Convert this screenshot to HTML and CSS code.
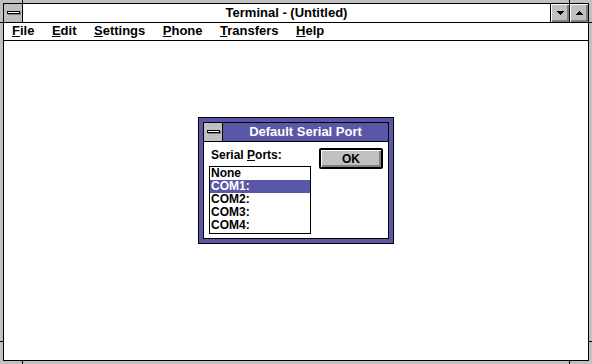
FILE: index.html
```html
<!DOCTYPE html>
<html>
<head>
<meta charset="utf-8">
<link rel="stylesheet" href="styles.css">
</head>
<body>
<div class="window">
  <div class="inner">
    <div class="titlebar">
      <div class="sysbox"><span class="sysbar"></span></div>
      <div class="title">Terminal - (Untitled)</div>
      <div class="btn"><svg width="7" height="4" viewBox="0 0 7 4"><path d="M0 0h7v1h-1v1h-1v1h-1v1h-1v-1h-1v-1h-1v-1h-1z" fill="#000"/></svg></div>
      <div class="btn btn-max"><svg width="7" height="4" viewBox="0 0 7 4"><path d="M3 0h1v1h1v1h1v1h1v1h-7v-1h1v-1h1v-1h1z" fill="#000"/></svg></div>
    </div>
    <div class="menubar">
      <span class="menu"><u>F</u>ile</span>
      <span class="menu"><u>E</u>dit</span>
      <span class="menu"><u>S</u>ettings</span>
      <span class="menu"><u>P</u>hone</span>
      <span class="menu"><u>T</u>ransfers</span>
      <span class="menu"><u>H</u>elp</span>
    </div>
    <div class="client">
      <div class="dialog">
        <div class="dlg-inner">
          <div class="dlg-title">
            <div class="sysbox"><span class="sysbar"></span></div>
            <div class="dlg-caption">Default Serial Port</div>
          </div>
          <div class="dlg-body">
            <div class="col">
              <div class="label">Serial <u>P</u>orts:</div>
              <div class="listbox">
                <div class="item">None</div>
                <div class="item sel">COM1:</div>
                <div class="item">COM2:</div>
                <div class="item">COM3:</div>
                <div class="item">COM4:</div>
              </div>
            </div>
            <div class="ok">OK</div>
          </div>
        </div>
      </div>
    </div>
  </div>
  <i class="mark mv mt1"></i>
  <i class="mark mv mt2"></i>
  <i class="mark mv mb1"></i>
  <i class="mark mv mb2"></i>
  <i class="mark mh ml1"></i>
  <i class="mark mh ml2"></i>
  <i class="mark mh mr1"></i>
  <i class="mark mh mr2"></i>
</div>
</body>
</html>
```
FILE: styles.css
```css
html, body {
  margin: 0;
  padding: 0;
}
body {
  width: 592px;
  height: 364px;
  overflow: hidden;
  font-family: "Liberation Sans", Arial, sans-serif;
  font-weight: bold;
  color: #000;
}
.window {
  position: relative;
  width: 592px;
  height: 364px;
  box-sizing: border-box;
  padding: 3px;
  background: #c0c0c0;
}
.inner {
  height: 100%;
  box-sizing: border-box;
  border: 1px solid #000;
  background: #fff;
  display: flex;
  flex-direction: column;
}
.titlebar {
  display: flex;
  height: 18px;
  border-bottom: 1px solid #000;
  flex-shrink: 0;
}
.sysbox {
  width: 18px;
  background: #c0c0c0;
  border-right: 1px solid #000;
  display: flex;
  align-items: center;
  justify-content: center;
}
.sysbar {
  display: block;
  width: 11px;
  height: 1px;
  border: 1px solid #000;
  background: #fff;
  box-shadow: 1px 1px 0 #808080;
  margin-top: -1px;
}
.title {
  flex: 1;
  text-align: center;
  font-size: 13px;
  line-height: 18px;
  border-right: 1px solid #000;
  background: #fff;
}
.btn {
  width: 18px;
  background: #c0c0c0;
  box-shadow: inset 1px 1px 0 #fff, inset -2px -2px 0 #808080;
  display: flex;
  align-items: center;
  justify-content: center;
  padding-left: 1px;
  box-sizing: border-box;
}
.btn svg {
  display: block;
  margin-top: -1px;
}
.btn-max {
  border-left: 1px solid #000;
  width: 19px;
}
.menubar {
  display: flex;
  gap: 17.5px;
  height: 18px;
  box-sizing: border-box;
  padding: 0 0 2px 8px;
  border-bottom: 1px solid #000;
  font-size: 13px;
  line-height: 16px;
  flex-shrink: 0;
}
.menubar .menu {
  white-space: nowrap;
}
.client {
  flex: 1;
  position: relative;
}
.dialog {
  position: absolute;
  left: 194px;
  top: 76px;
  width: 196px;
  height: 127px;
  box-sizing: border-box;
  border: 1px solid #000;
  padding: 4px;
  background: #5b57a8;
}
.dlg-inner {
  height: 100%;
  box-sizing: border-box;
  border: 1px solid #000;
  background: #fff;
  display: flex;
  flex-direction: column;
}
.dlg-title {
  display: flex;
  height: 18px;
  flex-shrink: 0;
  border-bottom: 1px solid #000;
  background: #5b57a8;
  color: #fff;
}
.dlg-caption {
  flex: 1;
  text-align: center;
  font-size: 13px;
  line-height: 18px;
}
.dlg-body {
  flex: 1;
  display: flex;
  align-items: flex-start;
  padding: 6px 0 0 7px;
  font-size: 12px;
}
.col {
  display: flex;
  flex-direction: column;
}
.label {
  line-height: 14px;
}
.listbox {
  margin: 4px 0 0 -2px;
  width: 102px;
  height: 68px;
  box-sizing: border-box;
  border: 1px solid #000;
}
.item {
  height: 13px;
  line-height: 13px;
  padding-left: 1px;
}
.item.sel {
  background: #5b57a8;
  color: #fff;
}
.ok {
  margin-left: 8px;
  width: 64px;
  height: 21px;
  box-sizing: border-box;
  border: 2px solid #000;
  border-radius: 2px;
  background: #c0c0c0;
  box-shadow: inset 1px 1px 0 #fff, inset -2px -2px 0 #808080;
  display: flex;
  align-items: center;
  justify-content: center;
  font-size: 12px;
  padding-top: 1px;
}
.mark {
  position: absolute;
  background: #000;
}
.mv { width: 1px; height: 3px; }
.mh { width: 3px; height: 1px; }
.mt1 { left: 22px; top: 0; }
.mt2 { left: 569px; top: 0; }
.mb1 { left: 22px; bottom: 0; }
.mb2 { left: 569px; bottom: 0; }
.ml1 { left: 0; top: 22px; }
.ml2 { left: 0; top: 341px; }
.mr1 { right: 0; top: 22px; }
.mr2 { right: 0; top: 341px; }
```
